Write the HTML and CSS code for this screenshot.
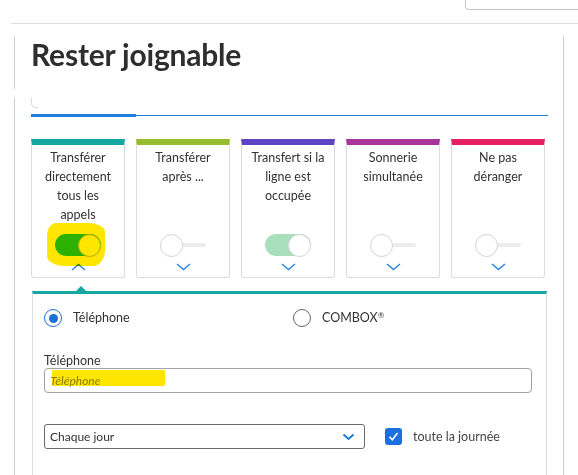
FILE: index.html
```html
<!DOCTYPE html>
<html lang="fr">
<head>
<meta charset="utf-8">
<title>Rester joignable</title>
<link rel="stylesheet" href="styles.css">
</head>
<body>
<div class="topbar"><div class="topbox"></div></div>
<div class="page">
  <div class="head"><h1 class="title">Rester joignable</h1></div>
  <div class="content">
    <div class="tabs">
      <span class="tab-stub"></span>
      <div class="tabline"><span class="tabline-active"></span></div>
    </div>

    <div class="cards">
      <div class="card card-teal">
        <div class="card-text">Transférer<br>directement<br>tous les<br>appels</div>
        <div class="toggle on"><span class="knob"></span></div>
        <svg class="chev" width="15" height="8" viewBox="0 0 15 8"><polyline points="1,7 7.5,1.5 14,7"/></svg>
        <span class="marker marker-toggle"></span>
      </div>
      <div class="card card-olive">
        <div class="card-text">Transférer<br>après ...</div>
        <div class="toggle off"><span class="bar"></span><span class="knob"></span></div>
        <svg class="chev" width="15" height="8" viewBox="0 0 15 8"><polyline points="1,1 7.5,6.5 14,1"/></svg>
      </div>
      <div class="card card-purple">
        <div class="card-text">Transfert si la<br>ligne est<br>occupée</div>
        <div class="toggle on pale"><span class="knob"></span></div>
        <svg class="chev" width="15" height="8" viewBox="0 0 15 8"><polyline points="1,1 7.5,6.5 14,1"/></svg>
      </div>
      <div class="card card-magenta">
        <div class="card-text">Sonnerie<br>simultanée</div>
        <div class="toggle off"><span class="bar"></span><span class="knob"></span></div>
        <svg class="chev" width="15" height="8" viewBox="0 0 15 8"><polyline points="1,1 7.5,6.5 14,1"/></svg>
      </div>
      <div class="card card-pink">
        <div class="card-text">Ne pas<br>déranger</div>
        <div class="toggle off"><span class="bar"></span><span class="knob"></span></div>
        <svg class="chev" width="15" height="8" viewBox="0 0 15 8"><polyline points="1,1 7.5,6.5 14,1"/></svg>
      </div>
    </div>

    <div class="pointer"></div>

    <div class="panel">
      <div class="radios">
        <label class="radio-item"><span class="radio checked"></span><span>Téléphone</span></label>
        <label class="radio-item"><span class="radio"></span><span>COMBOX<sup class="reg">®</sup></span></label>
      </div>

      <div class="field-label">Téléphone</div>
      <div class="input-wrap">
        <input class="text-input" type="text" placeholder="Téléphone">
        <span class="marker marker-input"></span>
      </div>

      <div class="select-row">
        <div class="select">
          <span>Chaque jour</span>
          <svg class="select-chev" width="13" height="8" viewBox="0 0 13 8"><polyline points="1.5,1.5 6.5,6 11.5,1.5"/></svg>
        </div>
        <span class="checkbox"><svg width="17" height="17" viewBox="0 0 17 17"><polyline points="4.5,8.8 7.3,11.8 12.5,5"/></svg></span>
        <span class="check-label">toute la journée</span>
      </div>
    </div>
  </div>
</div>
</body>
</html>
```
FILE: styles.css
```css
* { box-sizing: border-box; }

html, body {
  margin: 0;
  padding: 0;
  background: #fff;
  overflow: hidden;
}

body {
  font-family: Lato, "Open Sans", sans-serif;
  color: #333;
  width: 578px;
  height: 475px;
}

.topbar {
  margin-left: 11px;
  height: 24px;
  border-bottom: 1px solid #dedede;
  display: flex;
  justify-content: flex-end;
}

.topbox {
  width: 113px;
  height: 10px;
  border-left: 1px solid #c6c6c6;
  border-bottom: 1px solid #c6c6c6;
  border-bottom-left-radius: 4px;
}

.page {
  margin: 12px 0 0 14px;
  width: 550px;
  border-right: 1px solid #cfcfcf;
}

.head {
  height: 53px;
  margin-bottom: 9px;
  border-left: 1px solid #cfcfcf;
  padding-left: 16px;
}

.title {
  margin: 0;
  font-size: 30px;
  line-height: 36px;
  font-weight: 700;
  color: #2e2e2e;
  letter-spacing: -0.2px;
}

.content {
  border-left: 1px solid #cfcfcf;
  padding-left: 16px;
}

.tabs {
  position: relative;
  height: 19px;
  width: 517px;
}

.tab-stub {
  position: absolute;
  left: 0;
  top: 0;
  width: 7px;
  height: 10px;
  border-left: 1px solid #e3d3f0;
  border-bottom: 1px solid #e3d3f0;
  border-bottom-left-radius: 5px;
}

.tabline {
  position: absolute;
  left: 0;
  right: 0;
  bottom: 1px;
  height: 1px;
  background: #1e7fdc;
}

.tabline-active {
  position: absolute;
  left: 0;
  bottom: -1px;
  width: 105px;
  height: 3px;
  background: #1e7fdc;
}

.cards {
  margin-top: 22px;
  display: grid;
  grid-template-columns: repeat(5, 94px);
  column-gap: 11px;
}

.card {
  position: relative;
  height: 139px;
  border: 1px solid #dcdcdc;
  border-top: 6px solid #14a8a0;
  border-radius: 0 0 3px 3px;
  padding: 3px 2px 6px;
  display: flex;
  flex-direction: column;
  align-items: center;
}

.card-teal { border-top-color: #14a8a0; }
.card-olive { border-top-color: #96bd2e; }
.card-purple { border-top-color: #5b45c4; }
.card-magenta { border-top-color: #a8339b; }
.card-pink { border-top-color: #e61f63; }

.card-text {
  height: 76px;
  font-size: 12.5px;
  line-height: 19px;
  text-align: center;
  color: #333;
}

.toggle {
  position: relative;
  margin-top: 10px;
  width: 46px;
  height: 22px;
  border-radius: 11px;
}

.toggle .knob {
  position: absolute;
  top: -0.5px;
  width: 23px;
  height: 23px;
  border-radius: 50%;
  background: #fff;
  border: 1px solid #d4d4d4;
}

.toggle.on {
  background: #2cc414;
}

.toggle.on .knob {
  right: 0;
  border-color: #b8b8b8;
}

.toggle.on.pale {
  background: #a9dfbd;
}

.toggle.on.pale .knob {
  border-color: #d6d6d6;
}

.toggle.off .bar {
  position: absolute;
  left: 12px;
  right: 0;
  top: 9px;
  height: 4px;
  border-radius: 2px;
  background: #ececec;
}

.toggle.off .knob {
  left: 0;
}

.chev {
  margin-top: 7px;
  display: block;
}

.chev polyline {
  fill: none;
  stroke: #2a87dc;
  stroke-width: 1.5;
}

.marker {
  position: absolute;
  background: #ffe600;
  mix-blend-mode: multiply;
  pointer-events: none;
}

.marker-toggle {
  left: 15px;
  top: 78px;
  width: 58px;
  height: 43px;
  border-radius: 9px 16px 12px 18px / 12px 9px 16px 10px;
}

.pointer {
  margin: 8px 0 0 45px;
  width: 0;
  height: 0;
  border-left: 5px solid transparent;
  border-right: 5px solid transparent;
  border-bottom: 5px solid #14a8a0;
}

.panel {
  margin-left: 1px;
  width: 515px;
  border-top: 3px solid #14a8a0;
  border-left: 1px solid #dcdcdc;
  border-right: 1px solid #dcdcdc;
  padding: 15px 14px 26px 11px;
}

.radios {
  display: grid;
  grid-template-columns: 249px 1fr;
}

.radio-item {
  display: flex;
  align-items: center;
  gap: 11px;
  font-size: 12.5px;
  line-height: 18px;
  color: #333;
}

.radio {
  width: 18px;
  height: 18px;
  border-radius: 50%;
  border: 1px solid #666;
  display: flex;
  align-items: center;
  justify-content: center;
  flex: none;
}

.radio.checked {
  border: 1.5px solid #1a72d6;
}

.radio.checked::after {
  content: "";
  width: 9px;
  height: 9px;
  border-radius: 50%;
  background: #1a72d6;
}

.reg {
  font-size: 8px;
  vertical-align: 4px;
  line-height: 0;
}

.field-label {
  margin-top: 26px;
  font-size: 12.5px;
  line-height: 15px;
  color: #333;
}

.input-wrap {
  position: relative;
  width: 488px;
}

.text-input {
  display: block;
  width: 488px;
  height: 25px;
  margin: 0;
  border: 1px solid #a2a2a2;
  border-radius: 4px;
  padding: 0 5px;
  font-family: Lato, "Open Sans", sans-serif;
  font-size: 12px;
  color: #333;
  background: #fff;
  outline: none;
}

.text-input::placeholder {
  font-style: italic;
  color: #8a8a8a;
}

.marker-input {
  left: 8px;
  top: 2px;
  width: 113px;
  height: 16px;
  border-radius: 1px;
}

.select-row {
  margin-top: 31px;
  display: flex;
  align-items: center;
}

.select {
  width: 321px;
  height: 25px;
  border: 1px solid #6b6b6b;
  border-radius: 3px;
  padding: 0 9px 0 5px;
  display: flex;
  align-items: center;
  justify-content: space-between;
  font-size: 12px;
  color: #333;
}

.select-chev polyline {
  fill: none;
  stroke: #1f7bd6;
  stroke-width: 2;
}

.checkbox {
  margin-left: 20px;
  width: 17px;
  height: 17px;
  border-radius: 3px;
  background: #1b6fe0;
  display: block;
  flex: none;
}

.checkbox svg {
  display: block;
}

.checkbox polyline {
  fill: none;
  stroke: #fff;
  stroke-width: 1.6;
}

.check-label {
  margin-left: 11px;
  font-size: 12.5px;
  color: #444;
}
```
